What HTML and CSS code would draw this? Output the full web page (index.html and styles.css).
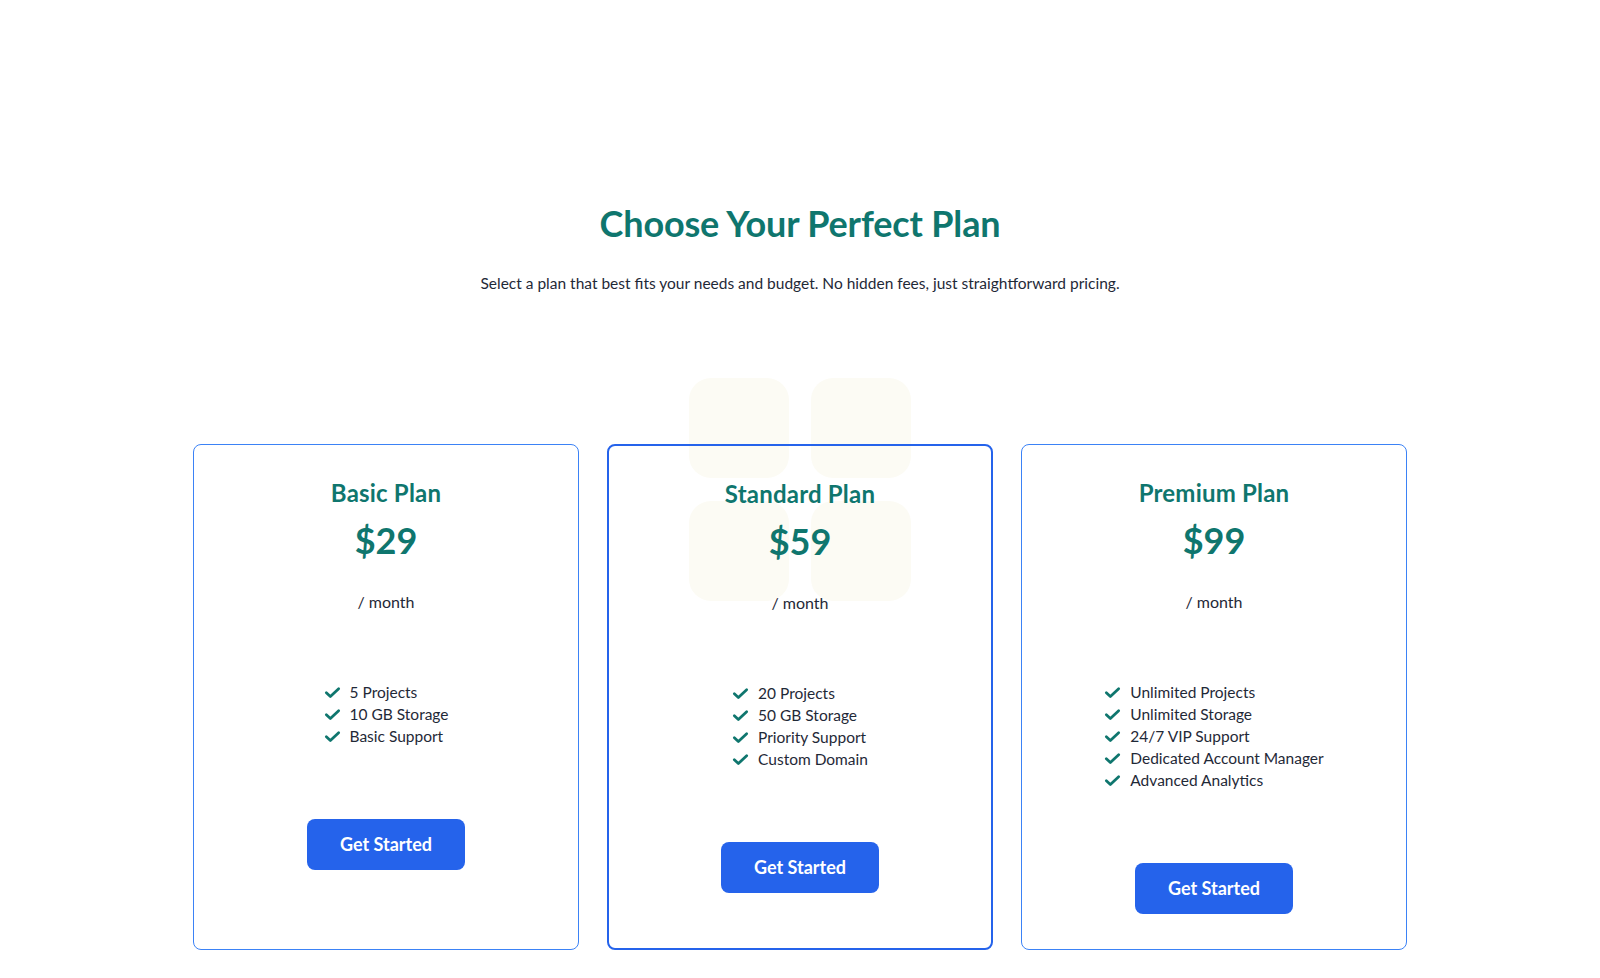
FILE: index.html
```html
<!DOCTYPE html>
<html lang="en">
<head>
<meta charset="utf-8">
<title>Choose Your Perfect Plan</title>
<link rel="stylesheet" href="styles.css">
</head>
<body>
<section class="pricing">
  <header class="intro">
    <h1 class="intro-title">Choose Your Perfect Plan</h1>
    <p class="intro-text">Select a plan that best fits your needs and budget. No hidden fees, just straightforward pricing.</p>
  </header>
  <div class="plans-wrap">
    <div class="deco" aria-hidden="true">
      <span class="deco-tile"></span><span class="deco-tile"></span><span class="deco-tile"></span><span class="deco-tile"></span>
    </div>
    <div class="plans">
      <article class="plan">
        <h2 class="plan-name">Basic Plan</h2>
        <div class="plan-price">$29</div>
        <div class="plan-period">/ month</div>
        <ul class="plan-features">
          <li><svg class="check" viewBox="0 0 16 16"><path d="M2.2 8.2l3.8 3.6L13.8 4.4"/></svg>5 Projects</li>
          <li><svg class="check" viewBox="0 0 16 16"><path d="M2.2 8.2l3.8 3.6L13.8 4.4"/></svg>10 GB Storage</li>
          <li><svg class="check" viewBox="0 0 16 16"><path d="M2.2 8.2l3.8 3.6L13.8 4.4"/></svg>Basic Support</li>
        </ul>
        <button class="plan-btn" type="button">Get Started</button>
      </article>
      <article class="plan plan-featured">
        <h2 class="plan-name">Standard Plan</h2>
        <div class="plan-price">$59</div>
        <div class="plan-period">/ month</div>
        <ul class="plan-features">
          <li><svg class="check" viewBox="0 0 16 16"><path d="M2.2 8.2l3.8 3.6L13.8 4.4"/></svg>20 Projects</li>
          <li><svg class="check" viewBox="0 0 16 16"><path d="M2.2 8.2l3.8 3.6L13.8 4.4"/></svg>50 GB Storage</li>
          <li><svg class="check" viewBox="0 0 16 16"><path d="M2.2 8.2l3.8 3.6L13.8 4.4"/></svg>Priority Support</li>
          <li><svg class="check" viewBox="0 0 16 16"><path d="M2.2 8.2l3.8 3.6L13.8 4.4"/></svg>Custom Domain</li>
        </ul>
        <button class="plan-btn" type="button">Get Started</button>
      </article>
      <article class="plan">
        <h2 class="plan-name">Premium Plan</h2>
        <div class="plan-price">$99</div>
        <div class="plan-period">/ month</div>
        <ul class="plan-features">
          <li><svg class="check" viewBox="0 0 16 16"><path d="M2.2 8.2l3.8 3.6L13.8 4.4"/></svg>Unlimited Projects</li>
          <li><svg class="check" viewBox="0 0 16 16"><path d="M2.2 8.2l3.8 3.6L13.8 4.4"/></svg>Unlimited Storage</li>
          <li><svg class="check" viewBox="0 0 16 16"><path d="M2.2 8.2l3.8 3.6L13.8 4.4"/></svg>24/7 VIP Support</li>
          <li><svg class="check" viewBox="0 0 16 16"><path d="M2.2 8.2l3.8 3.6L13.8 4.4"/></svg>Dedicated Account Manager</li>
          <li><svg class="check" viewBox="0 0 16 16"><path d="M2.2 8.2l3.8 3.6L13.8 4.4"/></svg>Advanced Analytics</li>
        </ul>
        <button class="plan-btn" type="button">Get Started</button>
      </article>
    </div>
  </div>
</section>
</body>
</html>
```

FILE: styles.css
```css
* { box-sizing: border-box; }

html, body {
  margin: 0;
  padding: 0;
  background: #ffffff;
}

body {
  font-family: "Lato", "Open Sans", sans-serif;
  color: #1f2937;
}

.pricing {
  padding-top: 203px;
  padding-bottom: 29px;
}

.intro {
  text-align: center;
}

.intro-title {
  margin: 0;
  font-size: 36px;
  line-height: 40px;
  font-weight: 700;
  color: #0f766e;
  letter-spacing: -0.15px;
}

.intro-text {
  margin: 28px 0 0;
  font-size: 15.5px;
  line-height: 24px;
  color: #1f2937;
}

.plans-wrap {
  position: relative;
  width: 1214px;
  margin: 149px auto 0;
}

.deco {
  position: absolute;
  left: 50%;
  top: -66px;
  transform: translateX(-50%);
  display: grid;
  grid-template-columns: 100px 100px;
  grid-auto-rows: 100px;
  column-gap: 22px;
  row-gap: 23px;
  z-index: 0;
}

.deco-tile {
  display: block;
  background: #fcfbf4;
  border-radius: 22px;
}

.plans {
  position: relative;
  z-index: 1;
  display: grid;
  grid-template-columns: repeat(3, 1fr);
  column-gap: 28px;
}

.plan {
  border: 1px solid #3b82f6;
  border-radius: 8px;
  padding: 32px 24px 35px;
  text-align: center;
  background: transparent;
}

.plan-featured {
  border: 2px solid #2563eb;
  padding: 32px 23px 34px;
}

.plan-name {
  margin: 0;
  font-size: 24px;
  line-height: 32px;
  font-weight: 700;
  color: #0f766e;
  letter-spacing: 0.2px;
}

.plan-price {
  margin-top: 10px;
  font-size: 36px;
  line-height: 42px;
  font-weight: 700;
  color: #0f766e;
}

.plan-period {
  margin-top: 29px;
  font-size: 16px;
  line-height: 24px;
  color: #1f2937;
}

.plan-features {
  display: inline-block;
  margin: 67px 0 0;
  padding: 0;
  list-style: none;
  text-align: left;
}

.plan-features li {
  display: flex;
  align-items: center;
  font-size: 15.5px;
  line-height: 22px;
  color: #1f2937;
}

.check {
  width: 17px;
  height: 17px;
  margin-right: 9px;
  flex: none;
  fill: none;
  stroke: #0f766e;
  stroke-width: 2.6;
  stroke-linecap: round;
  stroke-linejoin: round;
}

.plan-btn {
  display: block;
  margin: 71px auto 0;
  height: 51px;
  padding: 0 32px;
  min-width: 158px;
  border: none;
  border-radius: 8px;
  background: #2563eb;
  color: #ffffff;
  font-family: inherit;
  font-size: 18px;
  font-weight: 700;
  cursor: pointer;
}
```
